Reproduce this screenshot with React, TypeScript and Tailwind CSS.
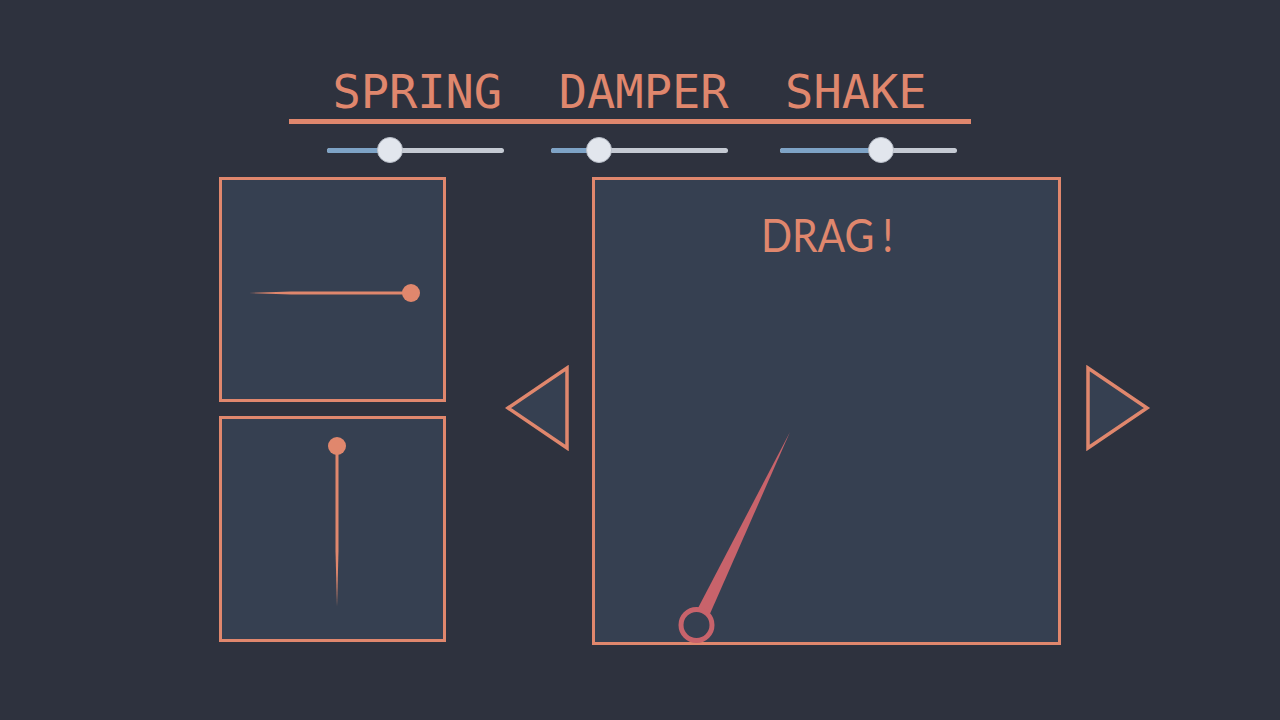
import React from 'react';

const ORANGE = '#e0876d';

const Slider: React.FC<{ value: number; className?: string }> = ({ value, className }) => (
    <div className={`relative w-[177px] h-[26px] flex items-center ${className ?? ''}`}>
        <div className="w-full h-[5px] rounded-full bg-[#c5cad3] overflow-hidden flex">
            <div className="h-full bg-[#7ea3c6]" style={{ width: `${value}px` }} />
        </div>
        {/* knob */}
        <div
            className="absolute top-0 w-[26px] h-[26px] rounded-full bg-[#e2e6ed] border border-[#b9bfc9]"
            style={{ left: `${value - 13}px` }}
        />
    </div>
);

const Triangle: React.FC<{ dir: 'left' | 'right' }> = ({ dir }) => (
    <svg width="66" height="86" viewBox="0 0 66 86" className="shrink-0">
        <polygon
            points={dir === 'left' ? '3,43 62,3 62,83' : '3,3 3,83 62,43'}
            fill="#364051"
            stroke={ORANGE}
            strokeWidth="3.5"
            strokeLinejoin="miter"
        />
    </svg>
);

export default function App() {
    return (
        <div className="w-[1280px] h-[720px] bg-[#2e323e] overflow-hidden flex flex-col">
            {/* Header */}
            <div className="pt-[68px] pl-[289px] w-[971px]">
                <div
                    className="text-center text-[47px] leading-none whitespace-pre text-[#e0876d] pr-[1px]"
                    style={{ fontFamily: '"DejaVu Sans Mono", monospace' }}
                >
                    {'SPRING  DAMPER  SHAKE'}
                </div>
                <div className="mt-[4px] h-[5px] w-[682px] bg-[#e0876d]" />
            </div>

            {/* Sliders */}
            <div className="mt-[13px] flex pl-[327px]">
                <Slider value={63} />
                <Slider value={48} className="ml-[47px]" />
                <Slider value={101} className="ml-[52px]" />
            </div>

            {/* Content */}
            <div className="mt-[14px] flex items-start pl-[219px]">
                {/* Left column */}
                <div className="flex flex-col gap-[14px] shrink-0">
                    <div className="relative w-[227px] h-[225px] border-[3px] border-[#e0876d] bg-[#364051]">
                        <svg className="absolute -left-[3px] -top-[3px]" width="227" height="225" viewBox="0 0 227 225">
                            <polygon points="30,116 72,114.5 192,114.5 192,117.5 72,117.5" fill={ORANGE} />
                            <circle cx="192" cy="116" r="9" fill={ORANGE} />
                        </svg>
                    </div>
                    <div className="relative w-[227px] h-[226px] border-[3px] border-[#e0876d] bg-[#364051]">
                        <svg className="absolute -left-[3px] -top-[3px]" width="227" height="226" viewBox="0 0 227 226">
                            <polygon points="116.5,30 119.5,30 119.5,135 118,191 116.5,135" fill={ORANGE} />
                            <circle cx="118" cy="30" r="9" fill={ORANGE} />
                        </svg>
                    </div>
                </div>

                <div className="ml-[59px] mt-[188px]">
                    <Triangle dir="left" />
                </div>

                {/* Main panel */}
                <div className="relative ml-[21px] w-[469px] h-[468px] border-[3px] border-[#e0876d] bg-[#364051]">
                    <div
                        className="pt-[31px] flex justify-center text-[47px] leading-none text-[#e0876d] pl-[1px]"
                        style={{ fontFamily: 'Lato, "Open Sans", sans-serif' }}
                    >
                        <div className="flex scale-x-[0.87]">
                            <span>DRAG</span>
                            <span className="ml-[9px]">!</span>
                        </div>
                    </div>
                    <svg className="absolute -left-[3px] -top-[3px]" width="469" height="468" viewBox="0 0 469 468">
                        <polygon points="105,433 117,439 198,255" fill="#c8636b" />
                        <circle cx="104.5" cy="448" r="15.5" fill="none" stroke="#c8636b" strokeWidth="5" />
                    </svg>
                </div>

                <div className="ml-[24px] mt-[188px]">
                    <Triangle dir="right" />
                </div>
            </div>
        </div>
    );
}
